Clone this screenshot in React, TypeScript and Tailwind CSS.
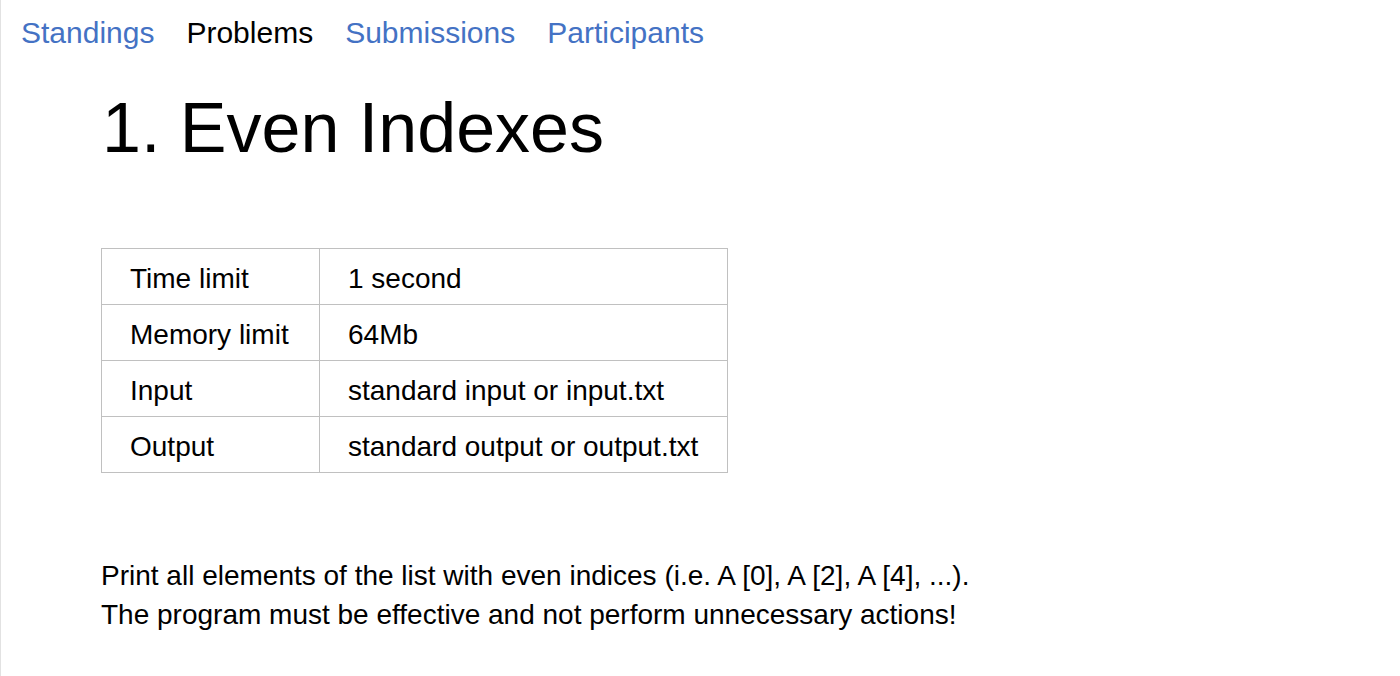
const NAV = [
  { label: "Standings", active: false },
  { label: "Problems", active: true },
  { label: "Submissions", active: false },
  { label: "Participants", active: false },
];

const LIMITS = [
  ["Time limit", "1 second"],
  ["Memory limit", "64Mb"],
  ["Input", "standard input or input.txt"],
  ["Output", "standard output or output.txt"],
];

export default function App() {
  return (
    <div className="min-h-[676px] bg-white border-l border-[#e2e2e2] text-black font-['Liberation_Sans',Arial,sans-serif]">
      {/* Top nav */}
      <nav className="flex gap-[32px] pl-[20px] pt-[18px] text-[30px] leading-none">
        {NAV.map(n => (
          <a
            key={n.label}
            href="#"
            className={n.active ? "text-black" : "text-[#4472c4]"}
          >
            {n.label}
          </a>
        ))}
      </nav>

      <div className="pl-[100px]">
        <h1 className="mt-[45px] text-[70px] leading-none font-normal ml-[1px]">1. Even Indexes</h1>

        <table className="mt-[85px] border-collapse text-[28px] leading-[32px]">
          <tbody>
            {LIMITS.map(([k, v]) => (
              <tr key={k}>
                <td className="w-[218px] border border-[#c0c0c0] pl-[28px] pr-[10px] pt-[14px] pb-[9px]">{k}</td>
                <td className="w-[408px] border border-[#c0c0c0] pl-[28px] pr-[10px] pt-[14px] pb-[9px]">{v}</td>
              </tr>
            ))}
          </tbody>
        </table>

        <div className="mt-[83px] text-[28px] leading-[39px]">
          <p>Print all elements of the list with even indices (i.e. A [0], A [2], A [4], ...).</p>
          <p>The program must be effective and not perform unnecessary actions!</p>
        </div>
      </div>
    </div>
  );
}
